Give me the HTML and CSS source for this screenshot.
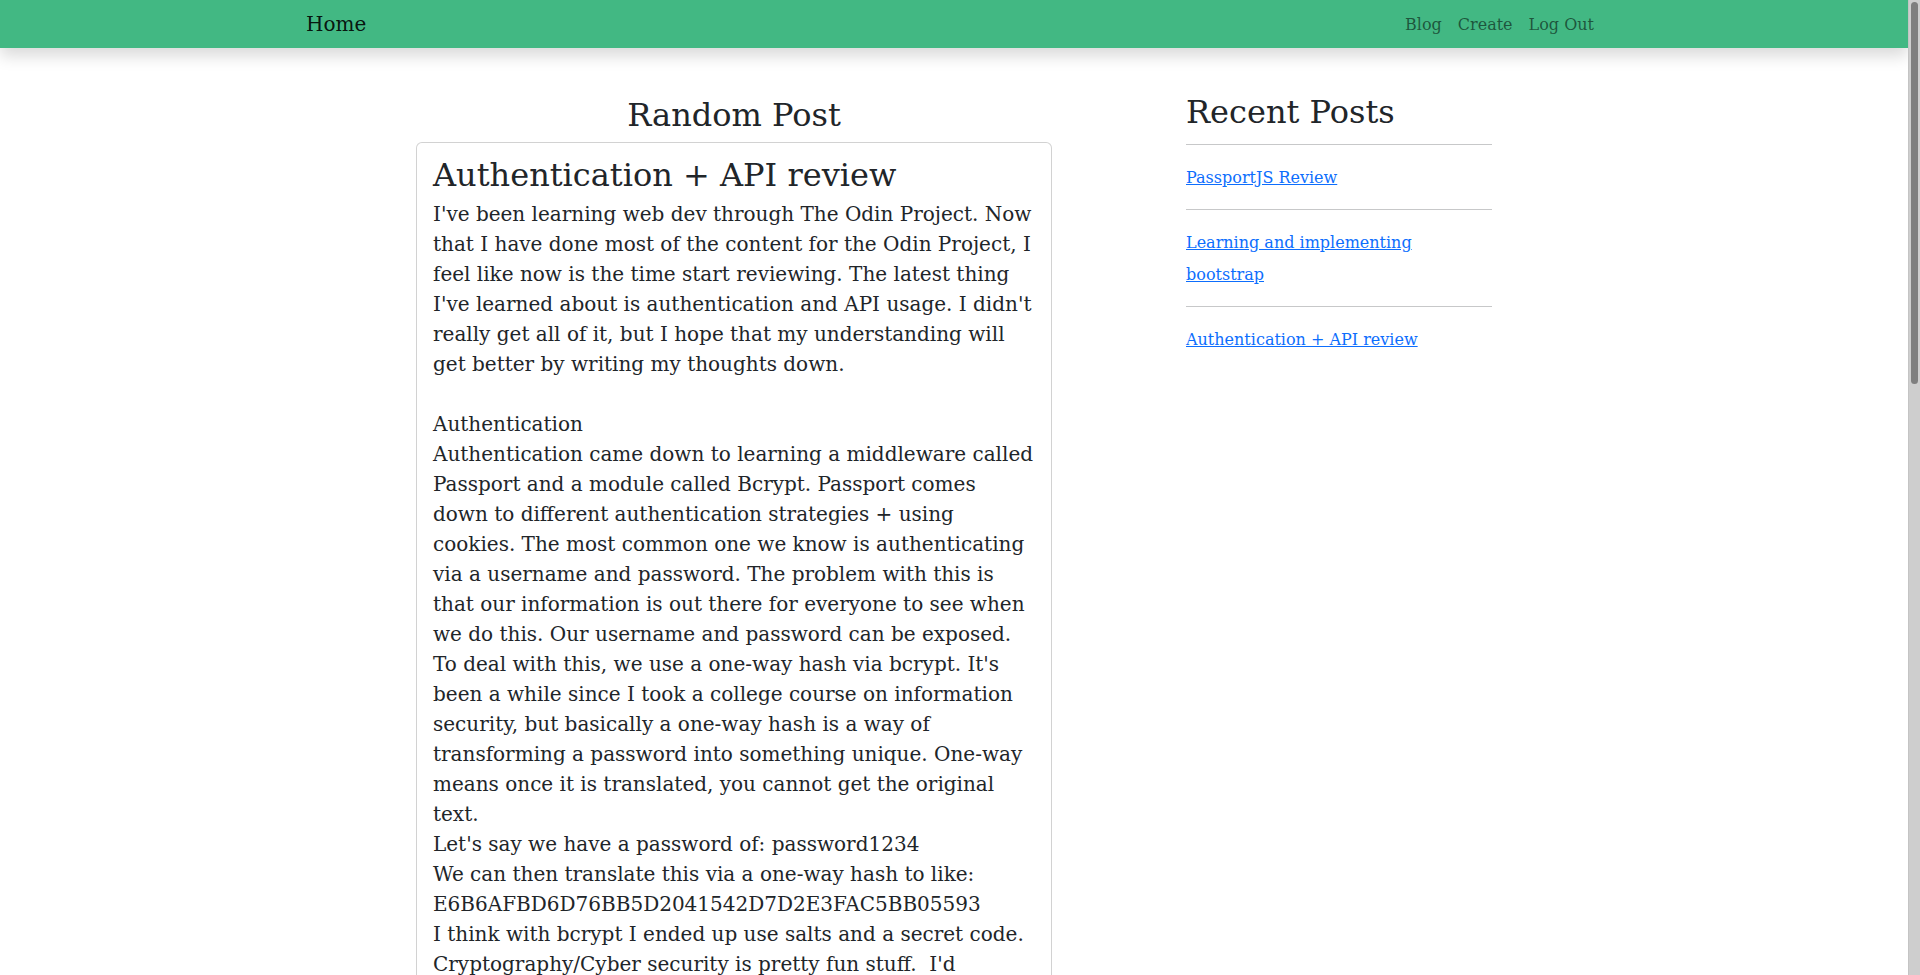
FILE: index.html
```html
<!DOCTYPE html>
<html lang="en">
<head>
<meta charset="utf-8">
<title>Blog</title>
<link rel="stylesheet" href="styles.css">
</head>
<body>
<nav class="navbar">
  <div class="nav-inner">
    <a class="brand" href="#">Home</a>
    <ul class="nav-links">
      <li><a href="#">Blog</a></li>
      <li><a href="#">Create</a></li>
      <li><a href="#">Log Out</a></li>
    </ul>
  </div>
</nav>
<main class="layout">
  <section class="main-col">
    <h2 class="section-title">Random Post</h2>
    <article class="card">
      <div class="card-body">
        <h2 class="card-title">Authentication + API review</h2>
        <p class="post-text">I've been learning web dev through The Odin Project. Now that I have done most of the content for the Odin Project, I feel like now is the time start reviewing. The latest thing I've learned about is authentication and API usage. I didn't really get all of it, but I hope that my understanding will get better by writing my thoughts down.

Authentication
Authentication came down to learning a middleware called Passport and a module called Bcrypt. Passport comes down to different authentication strategies + using cookies. The most common one we know is authenticating via a username and password. The problem with this is that our information is out there for everyone to see when we do this. Our username and password can be exposed. To deal with this, we use a one-way hash via bcrypt. It's been a while since I took a college course on information security, but basically a one-way hash is a way of transforming a password into something unique. One-way means once it is translated, you cannot get the original text.
Let's say we have a password of: password1234
We can then translate this via a one-way hash to like: E6B6AFBD6D76BB5D2041542D7D2E3FAC5BB05593
I think with bcrypt I ended up use salts and a secret code. Cryptography/Cyber security is pretty fun stuff.  I'd recommend looking into it if you ever get the chance, but for now I'm happy that I understand the basics of how passwords are stored.

Once a user logs in, Passport serializes the user into the session and stores a cookie in the browser. Every time the user makes a request, the cookie is sent back to the server and Passport deserializes the user so we know who is making the request. This is how the site remembers that you are logged in even after you refresh the page.

API
The second part of this section was about APIs. An API (Application Programming Interface) is basically a way for two programs to talk to each other. In our case, we built a REST API with Express that sends back JSON instead of rendering HTML views. The front end can then fetch that data and display it however it wants.
REST comes down to using the HTTP verbs to describe what we want to do with a resource:
GET - read data
POST - create data
PUT - update data
DELETE - remove data
For example, GET /posts returns all of the posts and POST /posts creates a new one.
The tricky part was combining authentication with the API. Since the front end and back end can be on different servers, cookies don't always work that well. That is where JSON Web Tokens (JWT) come in. When a user logs in, the server signs a token with a secret key and sends it back. The client stores the token and sends it in the Authorization header with every request. The server then verifies the token and knows who the user is without having to keep a session.
I still have a lot to learn about where to store tokens safely and how to refresh them, but I think I understand the general idea now. This blog itself is built with what I learned in this section, so it was good practice putting everything together.

Overall, I think authentication and APIs are really important to understand if you want to build real web applications. Almost every site out there has some kind of login and talks to some kind of API. I'm going to keep reviewing these topics and hopefully write more posts about them as I get better.</p>
      </div>
    </article>
  </section>
  <aside class="side-col">
    <h2 class="side-title">Recent Posts</h2>
    <hr class="divider">
    <div class="recent-item"><a href="#">PassportJS Review</a></div>
    <hr class="divider">
    <div class="recent-item"><a href="#">Learning and implementing bootstrap</a></div>
    <hr class="divider">
    <div class="recent-item"><a href="#">Authentication + API review</a></div>
  </aside>
</main>
<div class="scrollbar" aria-hidden="true"><div class="scrollbar-thumb"></div></div>
</body>
</html>
```
FILE: styles.css
```css
*, *::before, *::after {
  box-sizing: border-box;
}

html {
  scrollbar-width: none;
}

body {
  margin: 0 12px 0 0;
  font-family: "DejaVu Serif", serif;
  font-size: 16px;
  line-height: 1.5;
  color: #212529;
  background: #fff;
}

.navbar {
  background: #42b883;
  padding: 4px 0;
  box-shadow: 0 8px 16px rgba(0, 0, 0, 0.15);
}

.nav-inner {
  max-width: 1320px;
  margin: 0 auto;
  padding: 0 12px;
  display: flex;
  align-items: center;
  justify-content: space-between;
}

.brand {
  font-size: 20px;
  line-height: 30px;
  padding: 5px 0;
  color: rgba(0, 0, 0, 0.9);
  text-decoration: none;
}

.nav-links {
  display: flex;
  list-style: none;
  margin: 0;
  padding: 0;
}

.nav-links a {
  display: block;
  padding: 9px 8px 7px;
  line-height: 24px;
  color: rgba(0, 0, 0, 0.55);
  text-decoration: none;
}

.layout {
  max-width: 1320px;
  margin: 48px auto 16px;
  display: flex;
  justify-content: space-evenly;
  align-items: flex-start;
}

.main-col {
  width: 660px;
  padding: 0 12px;
}

.side-col {
  width: 330px;
  padding: 0 12px;
}

.section-title {
  font-size: 32px;
  font-weight: 400;
  line-height: 1.2;
  margin: 0 0 8px;
  text-align: center;
}

.card {
  border: 1px solid rgba(0, 0, 0, 0.175);
  border-radius: 6px;
  background: #fff;
}

.card-body {
  padding: 16px;
}

.card-title {
  font-size: 32px;
  font-weight: 400;
  line-height: 32px;
  margin: 0 0 8px;
}

.post-text {
  font-size: 20px;
  line-height: 30px;
  margin: 0;
  white-space: pre-wrap;
}

.side-title {
  font-size: 32px;
  font-weight: 400;
  line-height: 32px;
  margin: 0 0 8px;
}

.divider {
  margin: 16px 0;
  border: 0;
  border-top: 1px solid;
  color: inherit;
  opacity: 0.25;
}

.recent-item {
  line-height: 32px;
  padding-top: 1px;
  margin-bottom: -1px;
}

.recent-item a {
  color: #0d6efd;
  text-decoration: underline;
}

.scrollbar {
  position: fixed;
  top: 0;
  right: 0;
  width: 12px;
  height: 100vh;
  background: #cecece;
  border-left: 1px solid #c4c4c4;
  z-index: 10;
}

.scrollbar-thumb {
  margin: 2px 0 0 2px;
  width: 7px;
  height: 382px;
  border-radius: 4px;
  background: #7f7f7f;
}
```
